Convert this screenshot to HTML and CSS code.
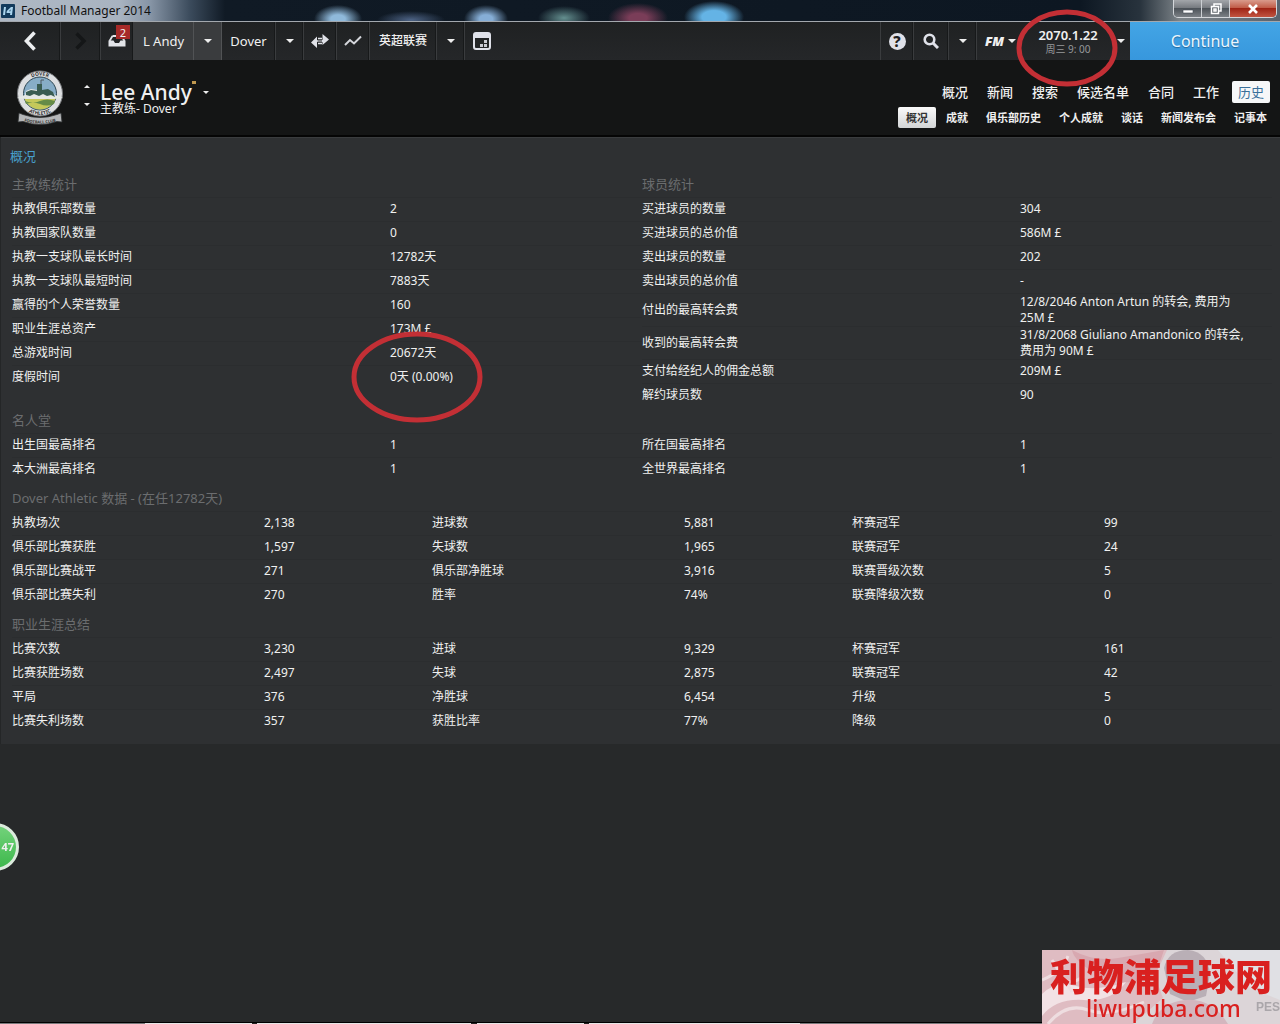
FILE: index.html
```html
<!DOCTYPE html>
<html lang="zh-CN">
<head>
<meta charset="utf-8">
<meta name="viewport" content="width=device-width, initial-scale=1">
<title>Football Manager 2014</title>
<link rel="stylesheet" href="styles.css">
</head>
<body>
<div class="titlebar">
  <svg class="app-icon" width="16" height="16" viewBox="0 0 16 16" aria-hidden="true"><rect x="1" y="1" width="14" height="14" rx="1" fill="#123a5c"/><path d="M4 4h2L5 12H3zM11 4h2l-1 8h-2l.3-2H6.500l.3-2z" fill="#a9d4ee"/><path d="M10.600 6.300 9 8.300h1.400z" fill="#123a5c"/></svg>
  <span class="app-name">Football Manager 2014</span>
  <div class="window-buttons">
    <button class="win" aria-label="最小化"><svg width="12" height="12" viewBox="0 0 12 12"><path d="M1 7h10v3H1z" fill="#fff" stroke="#454a55" stroke-width=".6"/></svg></button>
    <button class="win" aria-label="还原"><svg width="12" height="12" viewBox="0 0 12 12"><path d="M4 3V1h7v7H9M1.500 3.500h7v7h-7zM4 6h2v2H4z" fill="none" stroke="#fff" stroke-width="1.500"/></svg></button>
    <button class="win win-close" aria-label="关闭"><svg width="12" height="12" viewBox="0 0 12 12"><path d="M2 2l8 8M10 2l-8 8" stroke="#fff" stroke-width="2.600"/></svg></button>
  </div>
</div>

<div class="toolbar">
  <button class="tool w-back" aria-label="后退"><svg width="14" height="20" viewBox="0 0 14 20"><path d="M11.500 1.500 3.500 10l8 8.500" fill="none" stroke="#eceef0" stroke-width="3.600"/></svg></button>
  <button class="tool w-forward" aria-label="前进"><svg width="14" height="20" viewBox="0 0 14 20"><path d="M2.500 2.500 10 10l-7.500 7.500" fill="none" stroke="#141617" stroke-width="3.400"/></svg></button>
  <button class="tool w-icon inbox" aria-label="收件箱"><svg width="18" height="12" viewBox="0 0 18 12"><path d="M4.500 1h9M4.500 1 1.500 6M13.500 1l3 5" fill="none" stroke="#e2e4e8" stroke-width="1.800"/><path d="M.5 5.500h5L7 8h4l1.500-2.500h5v6H.5z" fill="#e2e4e8"/></svg><span class="badge">2</span></button>
  <button class="tool w-name lit">L Andy</button>
  <button class="tool w-drop lit" aria-label="经理菜单"><i class="caret"></i></button>
  <button class="tool w-club">Dover</button>
  <button class="tool w-drop" aria-label="俱乐部菜单"><i class="caret"></i></button>
  <button class="tool w-icon" aria-label="转会"><svg width="18" height="16" viewBox="0 0 18 16"><path d="M0 9.500 6 3.500V7h5.500V1L18 6.500 11.500 12V9H6v6z" fill="#e0e2e8"/><path d="M7 5.500h4M7 10.500h4" stroke="#e0e2e8" stroke-width="1.500"/><path d="M6.500 8h4.500" stroke="#1d1f20"/></svg></button>
  <button class="tool w-icon" aria-label="走势"><svg width="18" height="12" viewBox="0 0 18 12"><path d="M1 10l5-5 4 3.500 7-7" fill="none" stroke="#d5d7dc" stroke-width="2"/></svg></button>
  <button class="tool w-league">英超联赛</button>
  <button class="tool w-drop" aria-label="联赛菜单"><i class="caret"></i></button>
  <button class="tool w-icon last" aria-label="日历"><svg width="18" height="18" viewBox="0 0 18 18"><rect x="1" y="1" width="16" height="16" rx="2" fill="none" stroke="#dfe1e9" stroke-width="2"/><path d="M1 2h16v4H1z" fill="#dfe1e9"/><path d="M11 8h3v3h-3zM11 12h3v3h-3zM7 12h3v3H7z" fill="#c9cbd2"/></svg></button>
  <div class="toolbar-end">
    <button class="tool w-icon" aria-label="帮助"><span class="help">?</span></button>
    <button class="tool w-search" aria-label="搜索"><svg width="16" height="16" viewBox="0 0 16 16"><circle cx="6.500" cy="6.500" r="4.800" fill="none" stroke="#dfe1e9" stroke-width="2.600"/><path d="M10 10l5 5" stroke="#dfe1e9" stroke-width="3"/></svg></button>
    <button class="tool w-drop" aria-label="搜索选项"><i class="caret"></i></button>
    <button class="tool w-fm">FM<i class="caret"></i></button>
    <div class="date-box">
      <button class="tool w-date"><span class="date">2070.1.22</span><span class="time">周三 9: 00</span></button>
      <button class="tool w-date-drop" aria-label="日期选项"><i class="caret"></i></button>
      <svg class="ring ring-date" width="102" height="78" viewBox="0 0 102 78" aria-hidden="true"><ellipse cx="51" cy="39" rx="48" ry="36"/></svg>
    </div>
    <button class="continue">Continue</button>
  </div>
</div>

<header class="header">
  <svg class="crest" width="50" height="58" viewBox="0 0 50 58" role="img" aria-label="Dover Athletic">
    <defs><path id="arcTop" d="M7 24.500a18 18 0 0 1 36 0"/><path id="arcLow" d="M3.500 24.500a21.500 21.500 0 0 0 43 0"/><path id="arcRibbon" d="M4 50.500q21 8 42 0"/></defs>
    <circle cx="25" cy="24.500" r="22.500" fill="#dddfe1" stroke="#77797c"/>
    <path d="M4 44l-1 9 5-.5q17 6 34 0l5 .5-1-9-4 1.500q-17 6-34 0z" fill="#b4b6b8" stroke="#303234" stroke-width=".8"/>
    <circle cx="25" cy="24.500" r="16.500" fill="#87adc7" stroke="#2d4652"/>
    <path d="M9 28h32a16.500 16.500 0 0 1-32 0z" fill="#c5c85a"/>
    <path d="M10 32q8 3 15 0t15 0l-1 3q-7 3-14 0t-14 0z" fill="#658b47"/>
    <path d="M2 29l8-3 1-4 5-2 6 1h9l5 1 4 4 8 3-9 1H11z" fill="#e4e8e5"/>
    <path d="M11 26v-3l5-2 6 1v-7h5v6l6-1 5 3 2 5-4-2-4 1-4-2-4 2-5-2-4 2z" fill="#395c51"/>
    <path d="M26 15v-4h3" stroke="#4e5961" fill="none"/>
    <text class="crest-text"><textPath href="#arcTop" startOffset="50%" text-anchor="middle">DOVER</textPath></text>
    <text class="crest-text"><textPath href="#arcLow" startOffset="50%" text-anchor="middle">ATHLETIC</textPath></text>
    <text class="crest-text ribbon"><textPath href="#arcRibbon" startOffset="50%" text-anchor="middle">FOOTBALL CLUB</textPath></text>
  </svg>
  <div class="stepper"><button aria-label="上一个"><i class="mini up"></i></button><button aria-label="下一个"><i class="mini"></i></button></div>
  <div class="person">
    <h1>Lee Andy<i class="flag"></i><i class="mini"></i></h1>
    <p>主教练- Dover</p>
  </div>
  <div class="menus">
    <nav class="menu" aria-label="主菜单"><a href="#">概况</a><a href="#">新闻</a><a href="#">搜索</a><a href="#">候选名单</a><a href="#">合同</a><a href="#">工作</a><a href="#" class="current">历史</a></nav>
    <nav class="submenu" aria-label="子菜单"><a href="#" class="current">概况</a><a href="#">成就</a><a href="#">俱乐部历史</a><a href="#">个人成就</a><a href="#">谈话</a><a href="#">新闻发布会</a><a href="#">记事本</a></nav>
  </div>
</header>

<main class="panel">
  <h2>概况</h2>
  <div class="two">
    <section>
      <h3>主教练统计</h3>
      <table>
        <tr><th scope="row">执教俱乐部数量</th><td>2</td></tr>
        <tr><th scope="row">执教国家队数量</th><td>0</td></tr>
        <tr><th scope="row">执教一支球队最长时间</th><td>12782天</td></tr>
        <tr><th scope="row">执教一支球队最短时间</th><td>7883天</td></tr>
        <tr><th scope="row">赢得的个人荣誉数量</th><td>160</td></tr>
        <tr><th scope="row">职业生涯总资产</th><td>173M £</td></tr>
        <tr><th scope="row">总游戏时间</th><td>20672天</td></tr>
        <tr><th scope="row">度假时间</th><td class="marked">0天 (0.00%)<svg class="ring ring-holiday" width="132" height="92" viewBox="0 0 132 92" aria-hidden="true"><ellipse cx="66" cy="46" rx="63" ry="43"/></svg></td></tr>
      </table>
    </section>
    <section>
      <h3>球员统计</h3>
      <table>
        <tr><th scope="row">买进球员的数量</th><td>304</td></tr>
        <tr><th scope="row">买进球员的总价值</th><td>586M £</td></tr>
        <tr><th scope="row">卖出球员的数量</th><td>202</td></tr>
        <tr><th scope="row">卖出球员的总价值</th><td>-</td></tr>
        <tr class="tall"><th scope="row">付出的最高转会费</th><td>12/8/2046 Anton Artun 的转会, 费用为<br>25M £</td></tr>
        <tr class="tall"><th scope="row">收到的最高转会费</th><td>31/8/2068 Giuliano Amandonico 的转会,<br>费用为 90M £</td></tr>
        <tr><th scope="row">支付给经纪人的佣金总额</th><td>209M £</td></tr>
        <tr><th scope="row">解约球员数</th><td>90</td></tr>
      </table>
    </section>
  </div>

  <h3>名人堂</h3>
  <div class="two">
    <table>
      <tr><th scope="row">出生国最高排名</th><td>1</td></tr>
      <tr><th scope="row">本大洲最高排名</th><td>1</td></tr>
    </table>
    <table>
      <tr><th scope="row">所在国最高排名</th><td>1</td></tr>
      <tr><th scope="row">全世界最高排名</th><td>1</td></tr>
    </table>
  </div>

  <h3 class="spaced">Dover Athletic 数据 - (在任12782天)</h3>
  <div class="three">
    <table>
      <tr><th scope="row">执教场次</th><td>2,138</td></tr>
      <tr><th scope="row">俱乐部比赛获胜</th><td>1,597</td></tr>
      <tr><th scope="row">俱乐部比赛战平</th><td>271</td></tr>
      <tr><th scope="row">俱乐部比赛失利</th><td>270</td></tr>
    </table>
    <table>
      <tr><th scope="row">进球数</th><td>5,881</td></tr>
      <tr><th scope="row">失球数</th><td>1,965</td></tr>
      <tr><th scope="row">俱乐部净胜球</th><td>3,916</td></tr>
      <tr><th scope="row">胜率</th><td>74%</td></tr>
    </table>
    <table>
      <tr><th scope="row">杯赛冠军</th><td>99</td></tr>
      <tr><th scope="row">联赛冠军</th><td>24</td></tr>
      <tr><th scope="row">联赛晋级次数</th><td>5</td></tr>
      <tr><th scope="row">联赛降级次数</th><td>0</td></tr>
    </table>
  </div>

  <h3 class="spaced">职业生涯总结</h3>
  <div class="three">
    <table>
      <tr><th scope="row">比赛次数</th><td>3,230</td></tr>
      <tr><th scope="row">比赛获胜场数</th><td>2,497</td></tr>
      <tr><th scope="row">平局</th><td>376</td></tr>
      <tr><th scope="row">比赛失利场数</th><td>357</td></tr>
    </table>
    <table>
      <tr><th scope="row">进球</th><td>9,329</td></tr>
      <tr><th scope="row">失球</th><td>2,875</td></tr>
      <tr><th scope="row">净胜球</th><td>6,454</td></tr>
      <tr><th scope="row">获胜比率</th><td>77%</td></tr>
    </table>
    <table>
      <tr><th scope="row">杯赛冠军</th><td>161</td></tr>
      <tr><th scope="row">联赛冠军</th><td>42</td></tr>
      <tr><th scope="row">升级</th><td>5</td></tr>
      <tr><th scope="row">降级</th><td>0</td></tr>
    </table>
  </div>
</main>

<div class="bubble">47</div>
<div class="taskbar-edge"></div>
<div class="watermark">
  <svg class="watermark-art" width="238" height="74" viewBox="0 0 238 74" preserveAspectRatio="none" aria-hidden="true">
    <path d="M0 0h238v74H0z" fill="#dcd5d8"/>
    <path d="M0 0h125l-12 26 8 22-30 26H0z" fill="#dfbcc2"/>
    <path d="M30 0q22 12 46 8T122 0l-8 24q-30 16-56 2T30 0z" fill="#d8a8b0"/>
    <path d="M0 44q14-14 34-8t50-4q-14 20-42 18T0 66z" fill="#f2e2e5"/>
    <path d="M6 74q18-22 40-14t56-8M14 20q10 20 28 6M10 10l20 32M0 30q20-8 26-24" fill="none" stroke="#eedde0" stroke-width="3"/>
    <path d="M122 18q4-18 24-18 20 2 22 24l-4 22-18 6-18-8z" fill="#b9afb6"/>
    <path d="M110 74q8-22 34-24t42 24z" fill="#d3b6be"/>
    <path d="M176 0h62v50l-30-12z" fill="#e0e0e4"/>
  </svg>
  <strong>利物浦足球网</strong>
  <span class="domain">liwupuba.com</span>
  <span class="pes">PES</span>
</div>
</body>
</html>
```
FILE: styles.css
```css
* { box-sizing: border-box; }
body {
  margin: 0;
  min-height: 100vh;
  background: #27292a;
  color: #f0f0f0;
  font: 12px/16px "Noto Sans", "Noto Sans CJK SC", sans-serif;
}
button { margin: 0; padding: 0; border: 0; background: none; color: inherit; font: inherit; cursor: pointer; }
a { color: inherit; text-decoration: none; }
h1, h2, h3, p { margin: 0; font-weight: 400; }
svg { display: block; flex: none; }

/* Window frame */
.titlebar {
  display: flex;
  align-items: center;
  height: 22px;
  border-bottom: 1px solid #a3a8ae;
  color: #111;
  background:
    radial-gradient(ellipse 24px 14px at 338px 19px, #8fb9da 30%, transparent),
    radial-gradient(ellipse 34px 9px at 411px 20px, #4d6385, transparent),
    radial-gradient(ellipse 22px 14px at 486px 19px, #86aed6 30%, transparent),
    radial-gradient(ellipse 26px 12px at 564px 18px, #648f8f, transparent),
    radial-gradient(ellipse 30px 15px at 638px 18px, #7a3d58 30%, transparent),
    radial-gradient(ellipse 30px 16px at 714px 17px, #64b3e5 40%, transparent),
    linear-gradient(90deg, #aeb8c4 0, #a8b3c0 120px, #8795a6 150px, #3b4b5c 190px, #101a25 225px, #0d1722 calc(100% - 200px), #28333d calc(100% - 140px), #7d8489 calc(100% - 100px), #59636e);
}
.app-icon { margin-right: 5px; }
.window-buttons { display: flex; align-self: flex-start; height: 18px; margin: 0 3px 0 auto; border: 1px solid #d4d7db; border-top: 0; border-radius: 0 0 5px 5px; overflow: hidden; }
.win { display: grid; place-items: center; width: 28px; background: linear-gradient(#a3a6aa, #777b80 45%, #4d5359 50%, #7b8085); border-right: 1px solid #ccd0d4; }
.win-close { width: 46px; border: 0; background: linear-gradient(#d99b8c, #c15d49 45%, #9f2516 50%, #c25440); }

/* Toolbar */
.toolbar { display: flex; height: 38px; background: linear-gradient(#1f2122, #252729); }
.tool { position: relative; display: flex; flex: none; align-items: center; justify-content: center; border-right: 1px solid #3a3c3e; box-shadow: inset -1px 0 #17191a; font-size: 13px; }
.toolbar-end { display: flex; margin-left: auto; border-left: 1px solid #3a3c3e; }
.w-back { width: 61px; }
.w-forward { width: 40px; }
.w-icon { width: 33px; }
.w-name { width: 60px; }
.w-drop { width: 28px; }
.w-club { width: 54px; }
.w-league { width: 67px; font-size: 12px; font-weight: 500; }
.w-search { width: 35px; }
.w-fm { width: 47px; gap: 4px; border: 0; box-shadow: none; font-size: 13px; font-weight: 900; font-style: italic; }
.w-date { flex-direction: column; width: 88px; border: 0; box-shadow: none; }
.w-date-drop { width: 18px; border: 0; box-shadow: none; }
.lit { background: #3a3c3e; border-color: #515355; box-shadow: none; }
.last { border: 0; box-shadow: none; }
.caret { width: 0; height: 0; border: 4px solid transparent; border-top-color: #eee; border-bottom: 0; }
.badge { position: absolute; top: 3px; right: 3px; width: 14px; height: 14px; background: #a62a28; font-size: 11px; line-height: 15px; text-align: center; }
.help { width: 17px; height: 17px; border-radius: 50%; background: #dfe1e9; color: #1e2021; font-size: 15px; font-weight: 800; line-height: 17px; text-align: center; }
.date-box { position: relative; display: flex; }
.date { font-size: 13px; font-weight: 600; line-height: 15px; }
.time { color: #97999b; font-size: 10px; line-height: 12px; }
.continue { width: 150px; background: linear-gradient(#43a5e5, #3797dd); color: #eaf6ff; font-size: 16px; text-shadow: 0 1px 1px #24689b; }

/* Hand-drawn highlight rings */
.ring { position: absolute; z-index: 2; pointer-events: none; }
.ring ellipse { fill: none; stroke: #c32f35; stroke-width: 5; }
.ring-date { left: -8px; top: -13px; }
.ring-holiday { left: -39px; top: -34px; }

/* Person header */
.header { display: flex; height: 77px; padding: 9px 5px 0 15px; background: #141515; border-bottom: 2px solid #050505; }
.crest { margin-right: 18px; }
.crest-text { font-size: 5px; font-weight: 700; fill: #333; }
.ribbon { font-size: 4px; }
.stepper { display: flex; flex-direction: column; justify-content: space-between; height: 24px; margin-top: 14px; }
.stepper button { display: grid; place-items: center; width: 8px; height: 6px; }
.mini { width: 0; height: 0; border: 3px solid transparent; border-top-color: #eee; border-bottom: 0; }
.mini.up { border-top: 0; border-bottom: 3px solid #eee; }
.person { margin: 12px 0 0 9px; line-height: 16px; }
.person h1 { display: flex; align-items: center; font-size: 21px; font-weight: 500; line-height: 22px; }
.person p { line-height: 12px; }
.flag { align-self: flex-start; width: 4px; height: 3px; background: #c0984f; }
.flag + .mini { margin-left: 7px; }
.menus { display: flex; flex-direction: column; align-items: flex-end; gap: 4px; margin: 12px 0 0 auto; font-weight: 500; }
.menu, .submenu { display: flex; }
.menu { gap: 7px; margin-right: 5px; font-size: 13px; line-height: 22px; }
.menu a { padding: 0 6px; }
.submenu { gap: 2px; font-size: 11px; font-weight: 700; line-height: 21px; }
.submenu a { padding: 0 8px; }
.current { border-radius: 2px; background: #f6f7f8; }
.menu .current { color: #39709b; font-weight: 400; }
.submenu .current { background: linear-gradient(#fafafa, #d3d5d6); color: #333; }

/* Statistics */
.panel { padding: 4px 8px 11px 11px; background: #2e3032; border-left: 1px solid #242627; box-shadow: inset 0 1px #3a3c3e; }
h2 { margin-left: -2px; color: #48a0cd; font-size: 13px; line-height: 30px; }
h3 { color: #6b6d6f; font-size: 13px; line-height: 26px; }
.spaced { margin-top: 4px; }
.two, .three { display: grid; align-items: start; }
.two { grid-template-columns: repeat(2, 1fr); }
.three { grid-template-columns: repeat(3, 1fr); }
table { width: 100%; border-collapse: collapse; table-layout: fixed; }
tr { height: 24px; box-shadow: inset 0 1px #2b2d2f; }
.tall { height: 33px; }
th, td { padding: 0; text-align: left; font-weight: 400; vertical-align: middle; }
th { width: 60%; }
.marked { position: relative; }

/* Things floating over the window */
.bubble { position: fixed; left: -29px; bottom: 153px; width: 48px; height: 48px; padding-right: 2px; border: 3px solid #dcebdd; border-radius: 50%; background: linear-gradient(#73d27b, #3db84c); font-size: 11px; font-weight: 700; line-height: 42px; text-align: right; }
.taskbar-edge { position: fixed; left: 0; right: 0; bottom: 0; height: 2px; border-top: 1px solid #000; background: linear-gradient(90deg, #77797b 0 145px, #e6e6e6 145px 252px, #222 252px 257px, #e6e6e6 257px 471px, #222 471px 477px, #e6e6e6 477px 584px, #222 584px 589px, #e6e6e6 589px 800px, #77797b 800px); }
.watermark { position: fixed; right: 0; bottom: 0; display: flex; flex-direction: column; width: 238px; height: 74px; padding: 6px 0 0 8px; color: #d9201f; }
.watermark-art { position: absolute; left: 0; top: 0; }
.watermark strong { position: relative; font: 900 37px/39px "Noto Sans CJK SC", sans-serif; white-space: nowrap; }
.domain { position: relative; margin-left: 36px; font: 500 23px/26px "Noto Sans", sans-serif; }
.pes { position: absolute; right: 0; bottom: 10px; color: #aaa6aa; font: 700 12px/14px "Liberation Sans", sans-serif; }
```
